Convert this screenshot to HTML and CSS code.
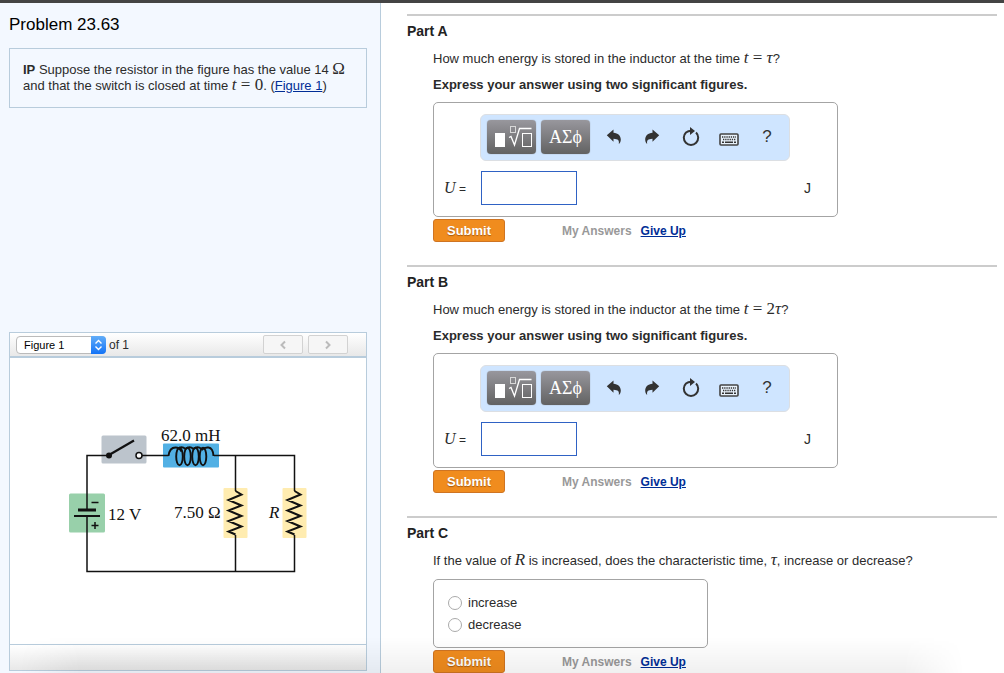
FILE: index.html
```
<!DOCTYPE html>
<html lang="en">
<head>
<meta charset="utf-8">
<title>Problem 23.63</title>
<link rel="stylesheet" href="styles.css">
</head>
<body>
<svg class="defs" aria-hidden="true">
  <symbol id="i-template" viewBox="0 0 50 34">
    <rect x="8" y="13" width="10" height="14" fill="#fff"/>
    <g fill="none" stroke="#fff">
      <rect x="23.5" y="6.500" width="5" height="6" stroke="#d8d8d8"/>
      <rect x="35.500" y="13.500" width="9" height="13"/>
      <path d="M22 17.500l2-1 3.500 8.500 5-16.500h12" stroke-width="1.300"/>
    </g>
  </symbol>
  <symbol id="i-undo" viewBox="0 0 16 16">
    <path d="M.8 6.200L7.500.5v3.200C12 4 14.800 6.800 14.800 10.500c0 2-.8 3.700-2 4.500.6-3.500-.6-5-5.300-5.200v3z" fill="#333"/>
  </symbol>
  <symbol id="i-reset" viewBox="0 0 18 20">
    <path d="M14 5.500A7.200 7.200 0 1 1 4 5.500Q6 4 9.500 3.800" fill="none" stroke="#333" stroke-width="2"/>
    <path d="M8 0l5 4-5 4z" fill="#333"/>
  </symbol>
  <symbol id="i-keyboard" viewBox="0 0 20 13">
    <rect x="1" y="1" width="18" height="11" rx="1" fill="#e8f1fa" stroke="#444" stroke-width="1.600"/>
    <path d="M3 4h14M4 6.500h13" fill="none" stroke="#333" stroke-width="1.400" stroke-dasharray="1.300 .9"/>
    <path d="M3 9.300h2m1 0h8m1 0h2" stroke="#333" stroke-width="1.500"/>
  </symbol>
</svg>
<div class="page">
  <aside class="side">
    <h1 class="side-title">Problem 23.63</h1>
    <p class="intro"><b>IP</b> Suppose the resistor in the figure has the value 14 <span class="math">Ω</span><br>and that the switch is closed at time <span class="math"><i>t</i> = 0</span>. (<a href="#figure">Figure 1</a>)</p>
    <section class="figure" id="figure">
      <div class="figure-head">
        <span class="picker">
          <select class="picker-select" id="fig"><option>Figure 1</option></select>
          <svg class="picker-arrows" viewBox="0 0 15 18" aria-hidden="true"><path d="M4.500 7.500l3-3 3 3M4.500 10.500l3 3 3-3" fill="none" stroke="#fff" stroke-width="1.400"/></svg>
        </span>
        <label class="picker-label" for="fig">of 1</label>
        <div class="pager">
          <button class="pager-button" type="button" aria-label="Previous figure"><svg width="8" height="10" viewBox="0 0 8 10"><path d="M6 1.500L2.500 5 6 8.500"/></svg></button>
          <button class="pager-button" type="button" aria-label="Next figure"><svg width="8" height="10" viewBox="0 0 8 10"><path d="M2 1.500L5.500 5 2 8.500"/></svg></button>
        </div>
      </div>
      <div class="figure-body">
        <svg class="circuit" viewBox="68 426 240 150" role="img" aria-label="RL circuit with a battery and a switch">
          <rect x="101.500" y="435.500" width="45" height="28" rx="1.500" fill="#bcc4cc"/>
          <rect x="69" y="493.500" width="36" height="39" rx="1.500" fill="#98d0aa"/>
          <rect x="163" y="443.500" width="56" height="24" rx="1" fill="#52b0e4"/>
          <rect x="223.500" y="488" width="24" height="50" rx="1" fill="#ffecb0"/>
          <rect x="282.500" y="488" width="24" height="50" rx="1" fill="#ffecb0"/>
          <g fill="none" stroke="#111" stroke-width="1.500">
            <path d="M109 455.500H87V509M87 516v55.500h207.500V535M235.500 571V535M142 455.500h26.500M214 455.500h80.500V491M235.500 455.500V491"/>
            <path d="M235.500 491l6 3.500-13 5.500 13 5.500-13 5 13 5.500-13 5 13 5.500-13 5 7 3M294.500 491l6 3.500-13 5.500 13 5.500-13 5 13 5.500-13 5 13 5.500-13 5 7 3" stroke-width="2"/>
            <g stroke-width="1.900">
              <path d="M168.500 456q1-8.500 7-8.500 4 0 6 4M177.500 449q4-3.500 8 0M185.500 449q4-3.500 8 0M193.500 449q4-3.500 8 0M201.500 450q3-3 7-2.500 4.500.5 5 8.500"/>
              <ellipse cx="179.500" cy="456.500" rx="3.300" ry="8.800"/>
              <ellipse cx="187.500" cy="456.500" rx="3.300" ry="8.800"/>
              <ellipse cx="195.500" cy="456.500" rx="3.300" ry="8.800"/>
              <ellipse cx="203" cy="456.500" rx="3.300" ry="8.800"/>
            </g>
            <path d="M109 455l25-14.500" stroke-width="2.200"/>
            <path d="M78 510h18" stroke-width="3"/>
            <path d="M74 516h26" stroke-width="2"/>
            <path d="M91.500 502.500h7M91.500 525.500h7M95 522v7"/>
            <circle cx="139" cy="455.500" r="3" fill="#fff"/>
          </g>
          <circle cx="109" cy="455.500" r="3" fill="#111"/>
          <g class="circuit-text">
            <text x="161" y="441">62.0 mH</text>
            <text x="108" y="520">12 V</text>
            <text x="174" y="518">7.50 Ω</text>
            <text x="269" y="518" font-style="italic">R</text>
          </g>
        </svg>
      </div>
      <div class="figure-foot"></div>
    </section>
  </aside>
  <main class="parts">
    <section class="part">
      <h2 class="part-title">Part A</h2>
      <form class="part-body">
        <p class="question">How much energy is stored in the inductor at the time <span class="math"><i>t</i> = <i>τ</i></span>?</p>
        <p class="question"><b>Express your answer using two significant figures.</b></p>
        <div class="answer">
          <div class="toolbar">
            <button class="tool-dark" type="button" aria-label="Templates"><svg width="50" height="34"><use href="#i-template"/></svg></button>
            <button class="tool-dark" type="button">ΑΣϕ</button>
            <button class="tool" type="button" aria-label="Undo"><svg width="16" height="16"><use href="#i-undo"/></svg></button>
            <button class="tool" type="button" aria-label="Redo"><svg class="flip" width="16" height="16"><use href="#i-undo"/></svg></button>
            <button class="tool" type="button" aria-label="Reset"><svg width="18" height="20"><use href="#i-reset"/></svg></button>
            <button class="tool" type="button" aria-label="Keyboard"><svg class="keyboard" width="20" height="13"><use href="#i-keyboard"/></svg></button>
            <button class="tool" type="button">?</button>
          </div>
          <div class="entry">
            <label class="entry-label" for="ua"><i>U</i> =</label>
            <input class="entry-input" id="ua" type="text">
            <span class="unit">J</span>
          </div>
        </div>
        <div class="actions">
          <button class="submit" type="button">Submit</button>
          <span class="my-answers">My Answers</span>
          <a class="give-up" href="#">Give Up</a>
        </div>
      </form>
    </section>
    <section class="part">
      <h2 class="part-title">Part B</h2>
      <form class="part-body">
        <p class="question">How much energy is stored in the inductor at the time <span class="math"><i>t</i> = 2<i>τ</i></span>?</p>
        <p class="question"><b>Express your answer using two significant figures.</b></p>
        <div class="answer">
          <div class="toolbar">
            <button class="tool-dark" type="button" aria-label="Templates"><svg width="50" height="34"><use href="#i-template"/></svg></button>
            <button class="tool-dark" type="button">ΑΣϕ</button>
            <button class="tool" type="button" aria-label="Undo"><svg width="16" height="16"><use href="#i-undo"/></svg></button>
            <button class="tool" type="button" aria-label="Redo"><svg class="flip" width="16" height="16"><use href="#i-undo"/></svg></button>
            <button class="tool" type="button" aria-label="Reset"><svg width="18" height="20"><use href="#i-reset"/></svg></button>
            <button class="tool" type="button" aria-label="Keyboard"><svg class="keyboard" width="20" height="13"><use href="#i-keyboard"/></svg></button>
            <button class="tool" type="button">?</button>
          </div>
          <div class="entry">
            <label class="entry-label" for="ub"><i>U</i> =</label>
            <input class="entry-input" id="ub" type="text">
            <span class="unit">J</span>
          </div>
        </div>
        <div class="actions">
          <button class="submit" type="button">Submit</button>
          <span class="my-answers">My Answers</span>
          <a class="give-up" href="#">Give Up</a>
        </div>
      </form>
    </section>
    <section class="part">
      <h2 class="part-title">Part C</h2>
      <form class="part-body">
        <p class="question">If the value of <span class="math"><i>R</i></span> is increased, does the characteristic time, <span class="math"><i>τ</i></span>, increase or decrease?</p>
        <div class="answer choices">
          <label class="choice"><input class="radio" type="radio" name="c">increase</label>
          <label class="choice"><input class="radio" type="radio" name="c">decrease</label>
        </div>
        <div class="actions">
          <button class="submit" type="button">Submit</button>
          <span class="my-answers">My Answers</span>
          <a class="give-up" href="#">Give Up</a>
        </div>
      </form>
    </section>
  </main>
  <div class="shade"></div>
</div>
</body>
</html>
```
FILE: styles.css
```
* { box-sizing: border-box; }
body {
  margin: 0;
  background: #fff;
  color: #2b2b2b;
  font: 13px/16px "Liberation Sans", Arial, sans-serif;
}
h1, h2, p { margin: 0; }
button, input, select { margin: 0; padding: 0; font: inherit; color: inherit; }
a { color: #002d96; }
.defs { display: none; }

.page {
  position: relative;
  display: grid;
  grid-template-columns: 381fr 623fr;
  grid-template-rows: minmax(0, 1fr);
  height: 100vh;
  overflow: hidden;
  border-top: 3px solid #444;
}

.side {
  display: flex;
  flex-direction: column;
  padding: 11px 13px 2px 9px;
  background: #f3f8ff;
  border-right: 1px solid #b8ccdc;
}
.side-title { color: #000; font-size: 17px; font-weight: 400; line-height: 22px; }
.intro {
  margin-top: 12px;
  padding: 13px;
  height: 60px;
  border: 1px solid #b8ccdc;
}
.math { font-family: "Liberation Serif", serif; font-size: 17px; line-height: 1px; }

.figure { margin-top: auto; border: 1px solid #b8ccdc; }
.figure-head {
  display: flex;
  align-items: center;
  height: 25px;
  padding: 0 18px 0 6px;
  background: linear-gradient(#fff, #e8e8e8);
  border-bottom: 2px solid #b8ccdc;
}
.picker { position: relative; display: flex; }
.picker-select {
  appearance: none;
  width: 90px;
  height: 18px;
  padding-left: 7px;
  background: #fff;
  border: 1px solid #bbb;
  border-radius: 4px;
  color: #000;
  font-size: 11px;
}
.picker-arrows {
  position: absolute;
  top: 0;
  right: 0;
  width: 15px;
  height: 18px;
  border-radius: 0 4px 4px 0;
  background: linear-gradient(#62adf8, #1273f7);
  pointer-events: none;
}
.picker-label { margin-left: 3px; font-size: 12px; }
.pager { display: flex; gap: 5px; margin-left: auto; }
.pager-button {
  display: grid;
  place-items: center;
  width: 40px;
  height: 19px;
  background: #f6f6f6;
  border: 1px solid #d2d2d2;
  border-radius: 2px;
}
.pager-button path { fill: none; stroke: #bbb; stroke-width: 2; }
.figure-body {
  display: grid;
  place-items: center;
  height: 286px;
  background: #fff;
}
.circuit { width: 240px; height: 150px; }
.circuit-text { font: 17px "Liberation Serif", serif; fill: #111; }
.figure-foot {
  height: 26px;
  background: linear-gradient(#fff, #e8e8e8);
  border-top: 1px solid #b8ccdc;
}

.parts { padding: 11px 7px 0 26px; }
.part { height: 251px; border-top: 2px solid #ccc; }
.part-title { padding-top: 7px; color: #222; font-size: 14px; line-height: 16px; }
.part-body { padding: 11px 0 0 26px; }
.question { height: 18px; margin-bottom: 8px; line-height: 18px; }
.answer {
  max-width: 405px;
  height: 115px;
  padding: 11px 10px;
  border: 1px solid #a4a4a4;
  border-radius: 5px;
}
.toolbar {
  display: flex;
  align-items: center;
  width: 310px;
  height: 47px;
  margin-left: 36px;
  padding: 0 3px 1px 6px;
  background: #cfe5ff;
  border: 1px solid #dcdfe3;
  border-radius: 6px;
}
.tool-dark {
  width: 49px;
  height: 34px;
  margin-right: 5px;
  background: linear-gradient(#98979d, #626262);
  border: 0;
  border-radius: 4px;
  box-shadow: 0 0 1px #777;
  color: #fff;
  font: 18px/30px "Liberation Serif", serif;
}
.tool-dark svg { display: block; }
.tool {
  display: grid;
  flex: 1;
  place-items: center;
  height: 34px;
  background: none;
  border: 0;
  color: #333;
  font-size: 17px;
}
.flip { transform: scaleX(-1); }
.keyboard { margin-top: 4px; }
.entry { display: flex; align-items: center; margin-top: 10px; }
.entry-label { width: 37px; font-size: 12px; }
.entry-label i { font: italic 16px/16px "Liberation Serif", serif; }
.entry-input { width: 96px; height: 34px; background: #fff; border: 1px solid #2f62c4; }
.unit { margin: 0 16px 0 auto; font-size: 14px; }
.actions { display: flex; align-items: center; margin-top: 2px; font-size: 12px; font-weight: 700; }
.submit {
  width: 72px;
  height: 23px;
  margin-right: 57px;
  background: #f08c1e;
  border: 1px solid #cf7422;
  border-radius: 3px;
  color: #fff;
  font-size: 13px;
  text-shadow: 0 1px 1px #a65a10;
}
.my-answers { margin-right: 9px; color: #999; }

.choices {
  display: flex;
  flex-direction: column;
  gap: 6px;
  max-width: 275px;
  height: 69px;
  margin-top: 9px;
  padding: 15px 14px;
}
.question:has(+ .choices) { margin-bottom: 0; }
.choice { display: flex; align-items: center; gap: 6px; }
.radio {
  appearance: none;
  width: 14px;
  height: 14px;
  background: #fff;
  border: 1px solid #aaa;
  border-radius: 50%;
}

.shade {
  position: absolute;
  right: 40px;
  bottom: 0;
  left: 20px;
  height: 36px;
  background: linear-gradient(transparent, rgba(0, 0, 0, .06));
  mask-image: linear-gradient(90deg, transparent, #000 60px, #000 calc(100% - 60px), transparent);
  pointer-events: none;
}
```
